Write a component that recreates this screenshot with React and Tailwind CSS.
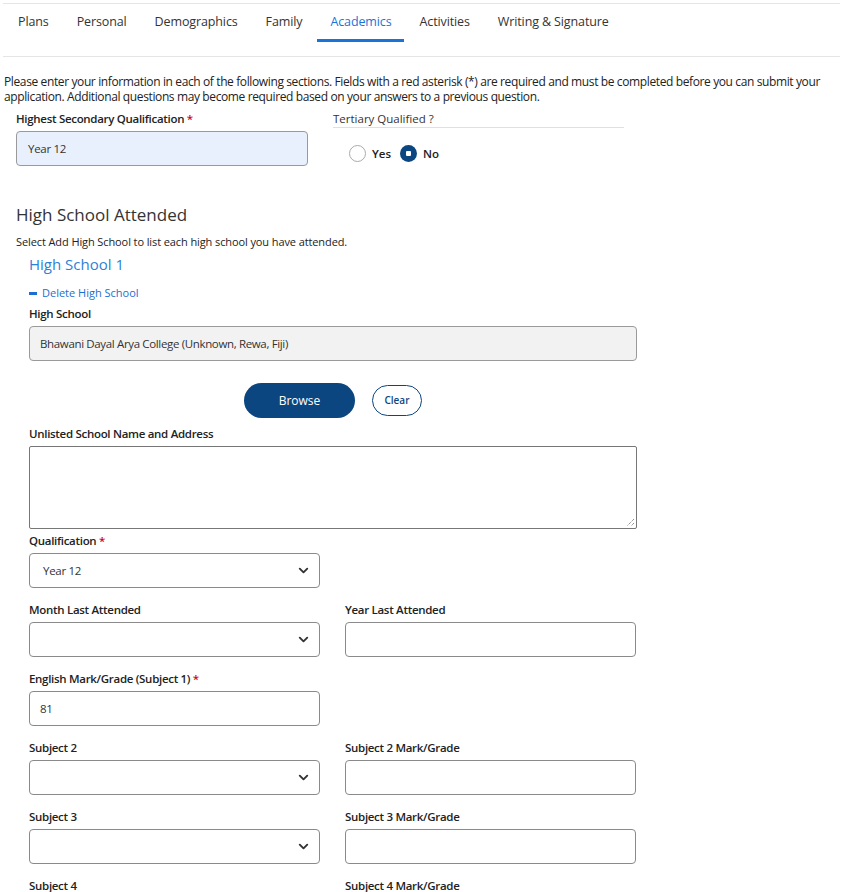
import { ChevronDown } from 'lucide-react'

const tabs = ['Plans', 'Personal', 'Demographics', 'Family', 'Academics', 'Activities', 'Writing & Signature']

function Label({ children, required }) {
  return (
    <div className="text-[11.5px] font-semibold text-[#222] leading-[14px] mb-[5px] tracking-[-0.3px]">
      {children}
      {required && <span className="text-[#d0021b]"> *</span>}
    </div>
  )
}

function Select({ value }) {
  return (
    <div className="h-[35px] w-full border border-[#8a8a8a] rounded-[4px] bg-white flex items-center justify-between pl-[13px] pr-[8px] text-[11.5px] tracking-[-0.3px] text-[#333]">
      <span>{value}</span>
      <ChevronDown size={15} strokeWidth={3} className="text-[#333]" />
    </div>
  )
}

function Input({ value }) {
  return (
    <div className="h-[35px] w-full border border-[#8a8a8a] rounded-[4px] bg-white flex items-center px-[10px] text-[11.5px] tracking-[-0.3px] text-[#333]">
      {value}
    </div>
  )
}

function Row({ left, right }) {
  return (
    <div className="grid grid-cols-[291px_291px] gap-x-[25px] mb-[15px]">
      <div>{left}</div>
      <div>{right}</div>
    </div>
  )
}

export default function App() {
  return (
    <div className="w-[848px] h-[892px] overflow-hidden bg-white text-[#222]" style={{ fontFamily: '"Open Sans", sans-serif' }}>
      {/* tabs */}
      <div className="pt-[3px] pl-[3px] w-[840px]">
        <div className="border-t border-b border-[#e5e5e5] flex h-[54px] pl-[1px]">
          {tabs.map((t) => (
            <div
              key={t}
              className={`px-[14px] h-full flex items-start pt-[10px] text-[12.5px] tracking-[-0.12px] ${t === 'Academics' ? 'text-[#1a73d6]' : 'text-[#333]'}`}
            >
              <div className="flex flex-col">
                <span className="leading-[16px]">{t}</span>
                {t === 'Academics' && <div className="h-[3px] bg-[#1a73d6] -ml-[13px] -mr-[12px] mt-[9px]" />}
              </div>
            </div>
          ))}
        </div>
      </div>

      <p className="px-[4px] mt-[17px] text-[12px] leading-[15px] tracking-[-0.38px] text-[#222] w-[840px]">
        Please enter your information in each of the following sections. Fields with a red asterisk (*) are required and must be completed before you can submit your application. Additional questions may become required based on your answers to a previous question.
      </p>

      {/* top fields */}
      <div className="flex pl-[16px] mt-[8px] gap-[25px]">
        <div className="w-[292px]">
          <Label required>Highest Secondary Qualification</Label>
          <div className="h-[35px] mt-[1px] border border-[#9a9a9a] rounded-[4px] bg-[#e8f0fe] flex items-center px-[11px] text-[11.5px] tracking-[-0.3px] text-[#333]">
            Year 12
          </div>
        </div>
        <div className="w-[291px]">
          <div className="text-[11.5px] text-[#333] leading-[14px] border-b border-[#e0e0e0] pb-[1px]">Tertiary Qualified ?</div>
          <div className="flex items-center mt-[17px] pl-[16px] text-[11.5px] font-semibold">
            <span className="w-[17px] h-[17px] rounded-full border border-[#aaa] bg-white" />
            <span className="ml-[6px]">Yes</span>
            <span className="ml-[9px] w-[17px] h-[17px] rounded-full bg-[#0b4680] flex items-center justify-center">
              <span className="w-[5px] h-[5px] bg-white rounded-[1px]" />
            </span>
            <span className="ml-[6px]">No</span>
          </div>
        </div>
      </div>

      <div className="pl-[16px] mt-[38px]">
        <h2 className="text-[17px] leading-[22px] text-[#333]">High School Attended</h2>
        <p className="text-[11px] mt-[9px] leading-[14px] tracking-[-0.1px] text-[#222]">Select Add High School to list each high school you have attended.</p>
      </div>

      <div className="pl-[29px] w-[637px]">
        <h3 className="text-[15px] leading-[20px] text-[#2f7fd8] mt-[5px]">High School 1</h3>
        <div className="flex items-center mt-[12px] text-[11px] text-[#1a6fd0] leading-[14px]">
          <span className="w-[8px] h-[3px] bg-[#1a6fd0] mr-[5px]" />
          Delete High School
        </div>
        <div className="mt-[7px]">
          <Label>High School</Label>
          <div className="h-[35px] mt-[1px] w-[608px] border border-[#9a9a9a] rounded-[4px] bg-[#f2f2f2] flex items-center px-[10px] text-[11.5px] tracking-[-0.35px] text-[#333]">
            Bhawani Dayal Arya College (Unknown, Rewa, Fiji)
          </div>
        </div>
        <div className="flex items-center mt-[22px] pl-[215px]">
          <button className="w-[111px] h-[35px] rounded-full bg-[#0b4680] text-white text-[12px] font-medium">Browse</button>
          <button className="ml-[17px] w-[50px] h-[31px] rounded-full bg-white border border-[#0b4680] text-[#0b4680] text-[10px] font-semibold">Clear</button>
        </div>
        <div className="mt-[9px]">
          <Label>Unlisted School Name and Address</Label>
          <div className="relative h-[83px] mt-[1px] w-[608px] border border-[#777] rounded-[2px] bg-white">
            <svg className="absolute right-[1px] bottom-[1px]" width="10" height="10" viewBox="0 0 10 10">
              <path d="M9 2 L2 9 M9 6 L6 9" stroke="#666" strokeWidth="1" strokeDasharray="1 1" />
            </svg>
          </div>
        </div>
        <div className="mt-[5px] mb-[15px] w-[291px]">
          <Label required>Qualification</Label>
          <Select value="Year 12" />
        </div>
        <Row left={<><Label>Month Last Attended</Label><Select /></>} right={<><Label>Year Last Attended</Label><Input /></>} />
        <Row left={<><Label required>English Mark/Grade (Subject 1)</Label><Input value="81" /></>} right={null} />
        <Row left={<><Label>Subject 2</Label><Select /></>} right={<><Label>Subject 2 Mark/Grade</Label><Input /></>} />
        <Row left={<><Label>Subject 3</Label><Select /></>} right={<><Label>Subject 3 Mark/Grade</Label><Input /></>} />
        <Row left={<><Label>Subject 4</Label><Select /></>} right={<><Label>Subject 4 Mark/Grade</Label><Input /></>} />
      </div>
    </div>
  )
}
